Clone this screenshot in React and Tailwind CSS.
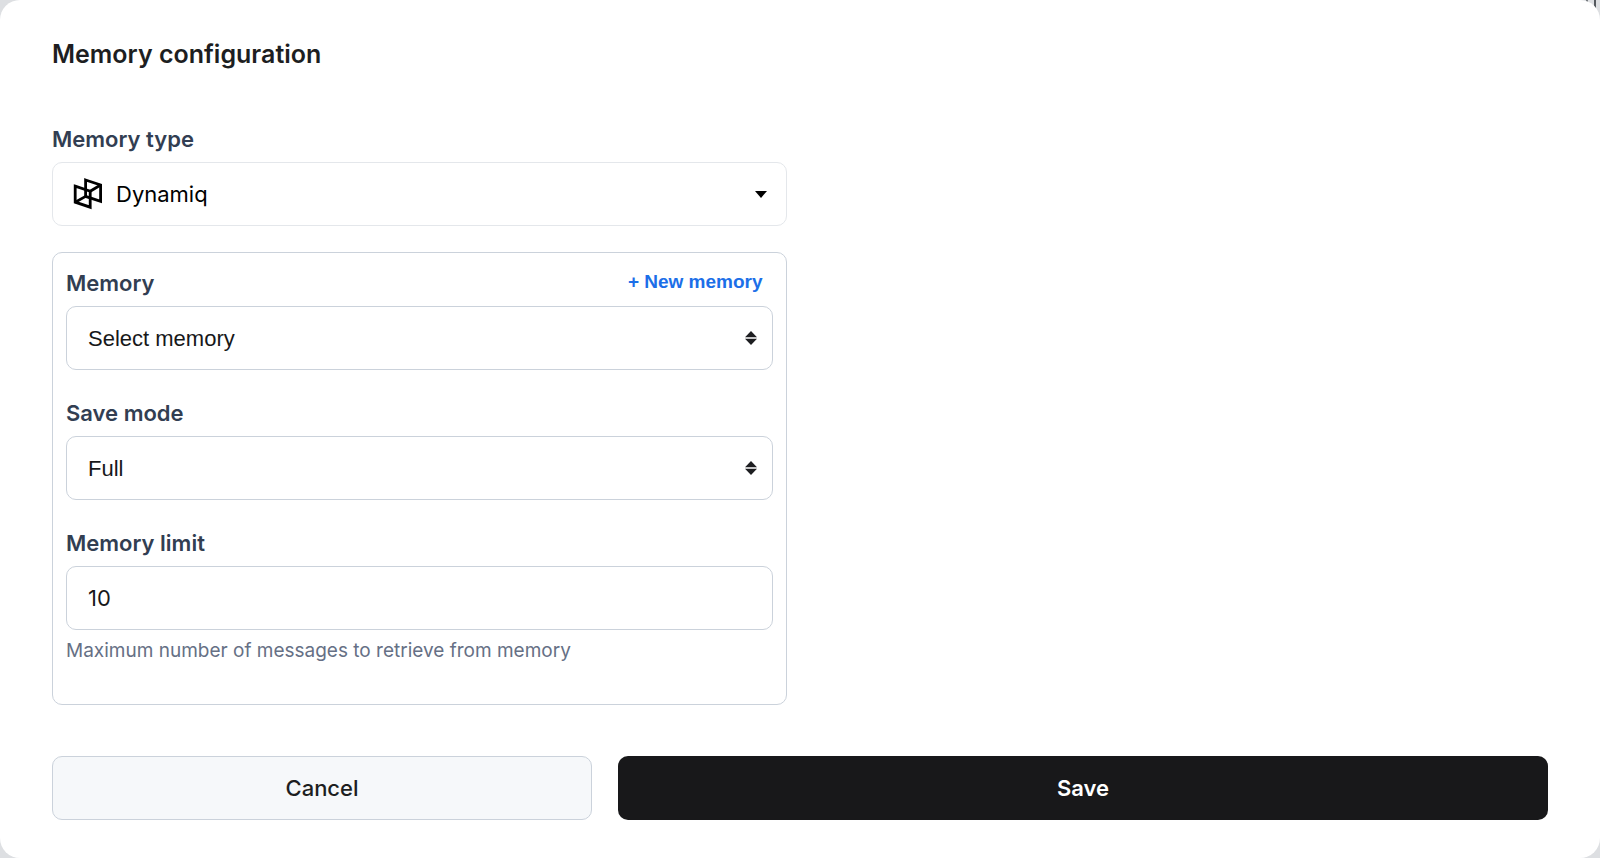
import React from "react";

function DynamiqLogo() {
  return (
    <svg className="h-8 w-8 shrink-0" viewBox="0 0 32 32" fill="none" stroke="black" strokeWidth="2.8" aria-hidden="true">
      <path d="M3.2 8.2 18.2 13.2V29.2L3.2 24.2Z" />
      <path d="M13.6 2 28.6 7V23.4L13.6 18.4Z" />
      <path d="M3.2 24.2 13.6 18.4M18.2 13.2 28.6 7" />
    </svg>
  );
}

function SortArrows() {
  return (
    <svg className="pointer-events-none col-start-1 row-start-1 mr-4 h-4 w-3 self-center justify-self-end" viewBox="0 0 12 16" fill="#1d1e21" aria-hidden="true">
      <path d="M6 1 12 7.3H0ZM0 8.7H12L6 15Z" />
    </svg>
  );
}

const label = "text-[22px] leading-8 font-semibold text-[#323e52]";
const field = "h-16 w-full rounded-[10px] border border-[#cbd2db] bg-white px-[21px] text-[#17181a]";

function SelectField({ id, title, option, action }) {
  return (
    <div className="flex flex-col gap-[7px]">
      <div className="flex items-start justify-between">
        <label htmlFor={id} className={label}>{title}</label>
        {action}
      </div>
      <div className="grid">
        <select id={id} className={`${field} col-start-1 row-start-1 appearance-none text-[22px] font-['Liberation_Sans',sans-serif]`}>
          <option>{option}</option>
        </select>
        <SortArrows />
      </div>
    </div>
  );
}

export default function App() {
  return (
    <div className="relative isolate min-h-screen bg-[#dddfe2] font-['Inter',sans-serif]">
      <div className="absolute top-0 right-1 -z-10 flex h-2 w-[10px] justify-between" aria-hidden="true">
        <span className="w-[2px] bg-[#777b80]" />
        <span className="w-[2px] bg-[#55595e]" />
      </div>
      <main className="flex min-h-screen flex-col rounded-[20px] bg-white px-[52px] pt-[36px] pb-[36px]">
        <h1 className="text-[25px] leading-9 font-semibold text-[#1d1e21]">Memory configuration</h1>

        <form className="mt-[51px] flex flex-col" onSubmit={(e) => e.preventDefault()}>
          <div className="flex w-[49.1%] flex-col gap-[26px]">
            <div className="flex flex-col gap-[7px]">
              <span id="type-label" className={label}>Memory type</span>
              <button type="button" aria-labelledby="type-label type-value" className="flex h-16 w-full items-center gap-3 rounded-[10px] border border-[#e4e7eb] bg-white px-[19px] text-[22px] text-black">
                <DynamiqLogo />
                <span id="type-value" className="grow text-left">Dynamiq</span>
                <svg className="h-[7px] w-3" viewBox="0 0 12 7" aria-hidden="true">
                  <path d="M0 0H12L6 7Z" />
                </svg>
              </button>
            </div>

            <section className="flex flex-col gap-[27px] rounded-[10px] border border-[#cbd2db] px-[13px] pt-[14px] pb-[39px]">
              <SelectField
                id="memory"
                title="Memory"
                option="Select memory"
                action={
                  <button type="button" className="mr-[10px] font-['Liberation_Sans',sans-serif] text-[19px] leading-[30px] font-bold text-[#1c6fe8]">
                    + New memory
                  </button>
                }
              />
              <SelectField id="mode" title="Save mode" option="Full" />
              <div className="flex flex-col gap-[7px]">
                <label htmlFor="limit" className={label}>Memory limit</label>
                <input id="limit" type="text" inputMode="numeric" defaultValue="10" className={`${field} text-[22px]`} />
                <p className="text-[19px] leading-7 text-[#667085]">Maximum number of messages to retrieve from memory</p>
              </div>
            </section>
          </div>

          <div className="mt-[51px] flex gap-[26px] text-[22px] font-medium">
            <button type="button" className="h-16 w-[36.1%] rounded-[10px] border border-[#cbd2db] bg-[#f6f8fa] text-[#1d1e21]">Cancel</button>
            <button type="submit" className="h-16 grow rounded-[10px] bg-[#18181a] font-semibold text-white">Save</button>
          </div>
        </form>
      </main>
    </div>
  );
}
